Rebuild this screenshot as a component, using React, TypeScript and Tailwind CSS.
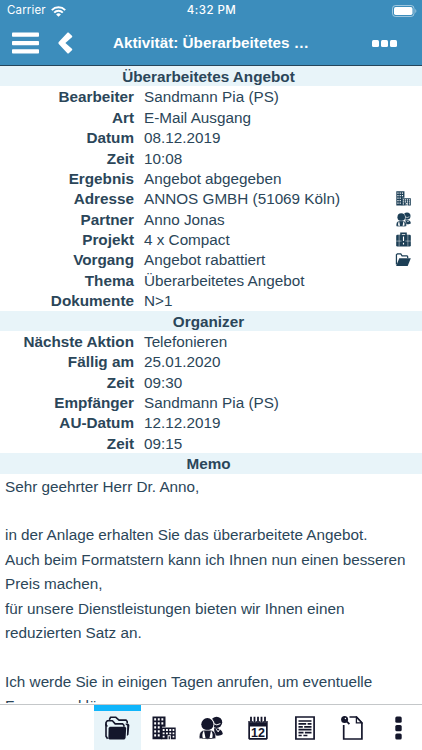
import type { ReactNode } from "react";

type Field = {
    label: string;
    value: string;
    icon?: ReactNode;
};

const BuildingsIcon = ({ size }: { size: number }) => (
    <svg width={size} height={size} viewBox="0 0 24 24" fill="currentColor">
        <path
            fillRule="evenodd"
            d="M.5.5h13v10.3H10v12.4H.5zM2.2 2.2v2.3h1.9V2.2zm3.6 0v2.3h1.9V2.2zm3.6 0v2.3h1.9V2.2zM2.2 6.2v2.3h1.9V6.2zm3.6 0v2.3h1.9V6.2zm3.6 0v2.3h1.9V6.2zM2.2 10.2v2.3h1.9v-2.3zm3.6 0v2.3h1.9v-2.3zM2.2 14.2v2.3h1.9v-2.3zm3.6 0v2.3h1.9v-2.3zM2.2 18.2v2.3h1.9v-2.3zm3.6 0v2.3h1.9v-2.3z"
        />
        <path
            fillRule="evenodd"
            d="M9.2 11.6h14.5v11.6h-4.9v-4h-3.2v4H9.2zM10.7 13.1V15h1.9v-1.9zm3.3 0V15h1.9v-1.9zm3.3 0V15h1.9v-1.9zm3.3 0V15h1.7v-1.9zM10.7 16.4v1.8h1.9v-1.8zm3.3 0v1.8h1.9v-1.8zm3.3 0v1.8h1.9v-1.8zm3.3 0v1.8h1.7v-1.8zM10.7 19.7v1.8h1.9v-1.8zm9.9 0v1.8h1.7v-1.8z"
        />
        <path d="M16.6 20.2h1.3v3h-1.3z" />
    </svg>
);

const PeopleIcon = ({ size }: { size: number }) => (
    <svg width={size} height={size} viewBox="0 0 24 24" fill="currentColor">
        <circle cx="17.6" cy="6.3" r="5.6" />
        <path d="M15 12.2c4.8-.4 8.2 1.6 8.8 5.8-1.8 1.8-5 2-8 1.3z" />
        <path d="m14.8 7.6 3 1.3 3.6-1.3M17.2 13.2l2 2.7 1.4-2.6" fill="none" stroke="white" strokeWidth="1" />
        <circle cx="8.4" cy="8.2" r="7" fill="white" />
        <circle cx="8.4" cy="8.2" r="6.1" />
        <path d="M.3 22.3c-.2-5 1.4-7.6 4.8-8.1h6.6c3.5.5 5.2 3.1 5 8.1-1 1.1-15.4 1.1-16.4 0z" stroke="white" strokeWidth=".5" />
        <path d="M5 14.6c-1.8 1.8-2 5.5-1.2 7.3h2.7zm7 0c1.8 1.8 2 5.5 1.2 7.3h-2.7z" fill="white" />
    </svg>
);

const BriefcaseIcon = () => (
    <svg width="15" height="15" viewBox="0 0 24 24" fill="currentColor">
        <path d="M8 5V2h8v3" fill="none" stroke="currentColor" strokeWidth="2.5" />
        <rect x=".3" y="4.5" width="23.4" height="18.5" rx="2" />
        <path d="M5 4.5V23M19 4.5V23M.3 14.5H9m6 0h8.7" stroke="white" strokeWidth=".7" />
        <path d="M12 7v7.5M12 17v3" stroke="white" strokeWidth="1.8" />
    </svg>
);

const OpenFolderIcon = () => (
    <svg width="16" height="15" viewBox="0 0 25 24" fill="currentColor">
        <path d="M2 20V4.5L3.5 3H9l2 3h8l1 1.5V10" fill="none" stroke="currentColor" strokeWidth="2" />
        <path d="M6.5 10H25l-5 12.5H1.5z" />
    </svg>
);

const FoldersIcon = () => (
    <svg width="25" height="24" viewBox="0 0 25 24" fill="none" stroke="currentColor" strokeWidth="1.6" strokeLinejoin="round">
        <path d="M4.3 3.8 5.6 1.2h5l3.4 2.9h7l1.2 1.5v2" />
        <path d="M2.4 10.5 1 9V6.4l1.3-1.6h5.1l2.8 3.1h7.4l1.3 1.3v1.6" />
        <path d="M1 7.5v12.8l1.6 2.5" />
        <path d="M4.8 10.8h15.4l1 1.2-.6 10-1.2 1.4H4.4l-1-1.2.2-10.2z" fill="currentColor" stroke="none" />
        <path d="M20 7.8h3.4l1 1.2-.9 9.8-1.6 1.2.3-10.2z" fill="currentColor" stroke="none" />
    </svg>
);

const CalendarIcon = () => (
    <svg width="20" height="24" viewBox="0 0 20 24" fill="currentColor">
        <path d="M.3 5h19.4v17.8l-1 1H1.3l-1-1zM2 10.6v11.3h16V10.6z" fillRule="evenodd" />
        <path d="M3 .8v5.4M6.5.8v5.4M10 .8v5.4M13.5.8v5.4M17 .8v5.4" stroke="white" strokeWidth="2.5" />
        <path d="M3 .8v5.6M6.5.8v5.6M10 .8v5.6M13.5.8v5.6M17 .8v5.6" stroke="currentColor" strokeWidth="1.8" />
        <text x="10" y="20.7" textAnchor="middle" className="font-['Liberation_Sans'] text-[12.5px] font-bold">
            12
        </text>
    </svg>
);

const DocumentIcon = () => (
    <svg width="20" height="24" viewBox="0 0 20 24" fill="none" stroke="currentColor" strokeWidth="1.7">
        <path d="M.9 1h18.2v22H.9z" />
        <path d="M3.5 5h13M3.5 7.9h7.7m1.4 0h3.9M3.5 10.8h4.3m1.4 0h7.3M3.5 13.7h13M3.5 16.6h5m1.4 0h6.6M3.5 19.5h3.2m1.7 0h4" />
    </svg>
);

const NoteIcon = () => (
    <svg width="22" height="24" viewBox="0 0 22 24" fill="none" stroke="currentColor" strokeWidth="1.7">
        <path d="M2.7 9v14h18.2V6.8L15.6 1H8.5" />
        <path d="M15.4 1.2v5.6h5.3z" fill="white" strokeWidth="1.3" />
        <circle cx="3.6" cy="3.5" r="3.5" fill="currentColor" stroke="none" />
        <path d="m6 5.7 2.4 2.4" strokeWidth="1.8" />
        <circle cx="4.4" cy="2.5" r=".7" fill="white" stroke="none" />
    </svg>
);

const MoreIcon = () => (
    <svg width="7" height="24" viewBox="0 0 7 24" fill="currentColor">
        <rect x=".3" y=".5" width="6.4" height="6.2" rx="1.5" />
        <rect x=".3" y="9" width="6.4" height="6.2" rx="1.5" />
        <rect x=".3" y="17.4" width="6.4" height="6.2" rx="1.5" />
    </svg>
);

const activityFields: Field[] = [
    { label: "Bearbeiter", value: "Sandmann Pia (PS)" },
    { label: "Art", value: "E-Mail Ausgang" },
    { label: "Datum", value: "08.12.2019" },
    { label: "Zeit", value: "10:08" },
    { label: "Ergebnis", value: "Angebot abgegeben" },
    { label: "Adresse", value: "ANNOS GMBH (51069 Köln)", icon: <BuildingsIcon size={15} /> },
    { label: "Partner", value: "Anno Jonas", icon: <PeopleIcon size={15} /> },
    { label: "Projekt", value: "4 x Compact", icon: <BriefcaseIcon /> },
    { label: "Vorgang", value: "Angebot rabattiert", icon: <OpenFolderIcon /> },
    { label: "Thema", value: "Überarbeitetes Angebot" },
    { label: "Dokumente", value: "N>1" },
];

const organizerFields: Field[] = [
    { label: "Nächste Aktion", value: "Telefonieren" },
    { label: "Fällig am", value: "25.01.2020" },
    { label: "Zeit", value: "09:30" },
    { label: "Empfänger", value: "Sandmann Pia (PS)" },
    { label: "AU-Datum", value: "12.12.2019" },
    { label: "Zeit", value: "09:15" },
];

const memo = [
    "Sehr geehrter Herr Dr. Anno,",
    "",
    "in der Anlage erhalten Sie das überarbeitete Angebot.",
    "Auch beim Formatstern kann ich Ihnen nun einen besseren",
    "Preis machen,",
    "für unsere Dienstleistungen bieten wir Ihnen einen",
    "reduzierten Satz an.",
    "",
    "Ich werde Sie in einigen Tagen anrufen, um eventuelle",
    "Fragen zu klären.",
];

function SectionTitle({ children }: { children: ReactNode }) {
    return <h2 className="h-[20.4px] bg-[#e8f4f9] pr-[5px] text-center font-bold leading-[21.5px]">{children}</h2>;
}

function FieldRows({ fields }: { fields: Field[] }) {
    return (
        <dl>
            {fields.map((field, i) => (
                <div key={i} className="flex h-[20.38px] leading-[21.5px]">
                    <dt className="w-[134px] text-right font-bold">{field.label}</dt>
                    <dd className="flex-1 pl-2.5">{field.value}</dd>
                    {field.icon && <span className="mr-[11px] pt-[3px] text-[#1d3f56]">{field.icon}</span>}
                </div>
            ))}
        </dl>
    );
}

function Header() {
    return (
        <header className="h-[66px] shrink-0 border-b border-[#25465c] bg-[#3c8dbc] text-white">
            <div className="grid h-[22px] grid-cols-3 items-center pl-[7px] pr-[5px] font-[Inter] text-[11.5px]">
                <div className="flex items-center gap-[5px]">
                    <span className="tracking-[0.15px]">Carrier</span>
                    <svg width="15" height="11" viewBox="0 0 15 11" fill="none" stroke="white" strokeWidth="2">
                        <path d="M.8 4.1a9.5 9.5 0 0 1 13.4 0M3.2 6.6a6 6 0 0 1 8.6 0" />
                        <path d="M5.1 8.4a3.5 3.5 0 0 1 4.8 0L7.5 10.8z" fill="white" stroke="none" />
                    </svg>
                </div>
                <span className="pr-px text-center font-medium tracking-[0.45px]">4:32 PM</span>
                <svg className="justify-self-end" width="25" height="12" viewBox="0 0 25 12">
                    <rect x=".5" y=".5" width="21.5" height="11" rx="3" fill="none" stroke="white" strokeOpacity=".5" />
                    <rect x="2" y="2" width="18.5" height="8" rx="1.7" fill="white" />
                    <path d="M23.3 4v4c1.4-.6 1.4-3.4 0-4z" fill="white" fillOpacity=".5" />
                </svg>
            </div>
            <div className="flex h-[42px] items-center pl-3">
                <button aria-label="Menü">
                    <svg width="27" height="22" viewBox="0 0 27 22" fill="white">
                        <rect y=".5" width="27" height="4.3" rx=".8" />
                        <rect y="9" width="27" height="4.3" rx=".8" />
                        <rect y="17.2" width="27" height="4.3" rx=".8" />
                    </svg>
                </button>
                <button aria-label="Zurück" className="ml-[19px]">
                    <svg width="15" height="22" viewBox="0 0 15 22" fill="white">
                        <path d="M10.5.6 14.2 4v1L7.4 11l6.8 6v1l-3.7 3.4h-.9L.5 11.7v-1.4L9.6.6z" />
                    </svg>
                </button>
                <h1 className="ml-10 flex-1 text-[15.28px] font-bold">Aktivität: Überarbeitetes …</h1>
                <button aria-label="Mehr" className="mr-[25px] flex gap-[2px]">
                    <span className="size-[7px] rounded-[1.5px] bg-white" />
                    <span className="size-[7px] rounded-[1.5px] bg-white" />
                    <span className="size-[7px] rounded-[1.5px] bg-white" />
                </button>
            </div>
        </header>
    );
}

function TabBar() {
    const tabs = [
        <BuildingsIcon size={24} />,
        <PeopleIcon size={24} />,
        <CalendarIcon />,
        <DocumentIcon />,
        <NoteIcon />,
        <MoreIcon />,
    ];

    return (
        <nav className="grid h-[46px] shrink-0 grid-cols-9 border-t border-[#c4c7c9] bg-white text-[#14162b]">
            <button className="col-start-3 flex justify-center border-t-[6px] border-[#10b5fb] bg-[#e8f4f9] pt-[4.5px]">
                <FoldersIcon />
            </button>
            {tabs.map((icon, i) => (
                <button key={i} className="flex justify-center pt-[10.5px]">
                    {icon}
                </button>
            ))}
        </nav>
    );
}

export default function App() {
    return (
        <div className="flex h-[750px] w-full flex-col overflow-hidden bg-white font-['Liberation_Sans',Arial,sans-serif] text-[15.28px] text-[#2b4659]">
            <Header />
            <main className="mb-[1.5px] min-h-0 flex-1 overflow-hidden">
                <SectionTitle>Überarbeitetes Angebot</SectionTitle>
                <FieldRows fields={activityFields} />
                <SectionTitle>Organizer</SectionTitle>
                <FieldRows fields={organizerFields} />
                <SectionTitle>Memo</SectionTitle>
                <div className="pl-[5px] pt-px leading-[24.45px]">
                    {memo.map((line, i) => (
                        <p key={i} className="h-[24.45px] whitespace-nowrap">
                            {line}
                        </p>
                    ))}
                </div>
            </main>
            <TabBar />
        </div>
    );
}
